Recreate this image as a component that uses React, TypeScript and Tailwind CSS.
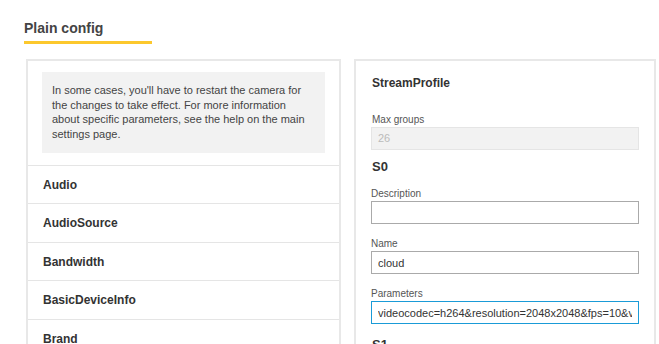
import React from "react";

const sections = ["Audio", "AudioSource", "Bandwidth", "BasicDeviceInfo", "Brand", "Event", "Image"];

function Field({ label, value, focused, className }: { label: string; value: string; focused?: boolean; className?: string }) {
  return (
    <div className={className}>
      <div className="pt-[2px] text-[10px] leading-[12px] text-[#555]">{label}</div>
      <input
        readOnly
        value={value}
        className={`mt-[1px] block h-[23px] w-full border bg-white px-[6px] text-[11px] text-[#333] outline-none ${
          focused ? "border-[#1a9bd7]" : "border-[#aaaaaa]"
        }`}
      />
    </div>
  );
}

export default function App() {
  return (
    <div className="h-screen overflow-hidden bg-white pt-[20px] pl-[24px] font-['Liberation_Sans',Arial,sans-serif]">
      <h1 className="text-[14px] leading-[17px] font-bold text-[#444]">Plain config</h1>
      <div className="mt-[4px] h-[3px] w-[128px] bg-[#fcc82d]" />

      <div className="mt-[15px] ml-[2px] flex items-start gap-[13px]">
        {/* Left: notice + groups */}
        <div className="w-[315px] border-2 border-[#e8e8e8] bg-white">
          <div className="px-[14px] pt-[11px] pb-[12px]">
            <div className="bg-[#f2f2f2] py-[11px] pl-[10px] pr-[12px] text-[11px] leading-[14.7px] text-[#444]">
              In some cases, you'll have to restart the camera for the changes to take effect. For more information
              about specific parameters, see the help on the main settings page.
            </div>
          </div>
          {sections.map((s) => (
            <div
              key={s}
              className="flex h-[38.5px] items-center border-t border-[#e5e5e5] pl-[15px] text-[12px] font-bold text-[#333]"
            >
              {s}
            </div>
          ))}
        </div>

        {/* Right: stream profile form */}
        <div className="w-[302px] border-2 border-[#e8e8e8] bg-white px-[15px] pt-[14px] pb-[20px]">
          <div className="pl-[1px] text-[12px] leading-[16px] font-bold text-[#333]">StreamProfile</div>

          <div className="mt-[22px] mb-[9px]">
            <div className="pt-[1px] pl-[1px] text-[10px] leading-[12px] text-[#555]">Max groups</div>
            <div className="mt-[1px] flex h-[23px] items-center border border-[#e5e5e5] bg-[#f2f2f2] px-[6px] text-[11px] text-[#bbbbbb]">
              26
            </div>
          </div>

          <div className="mb-[11px] pl-[1px] text-[13px] leading-[16px] font-bold text-[#333]">S0</div>

          <Field label="Description" value="" className="mb-[12px]" />
          <Field label="Name" value="cloud" className="mb-[12px]" />
          <Field
            label="Parameters"
            value="videocodec=h264&resolution=2048x2048&fps=10&videokeyframeinterval=32&videomaxbitrate=2000"
            focused
            className="mb-[13px]"
          />

          <div className="pl-[1px] text-[13px] leading-[16px] font-bold text-[#333]">S1</div>
          <Field label="Description" value="" className="mt-[11px] mb-[12px]" />
        </div>
      </div>
    </div>
  );
}
